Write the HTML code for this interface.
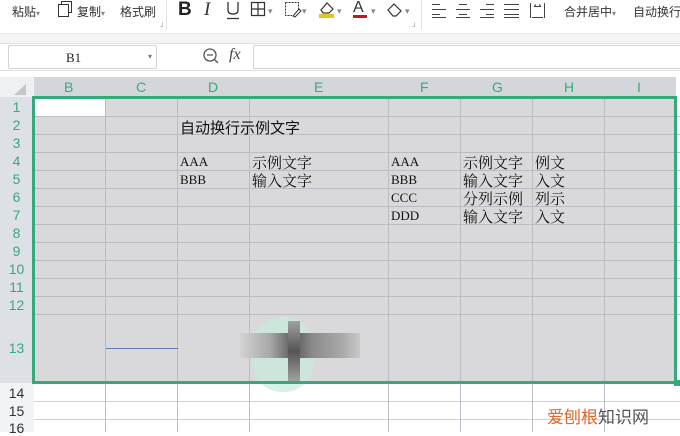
<!DOCTYPE html>
<html><head><meta charset="utf-8"><style>
*{margin:0;padding:0;box-sizing:border-box}
body{width:680px;height:432px;overflow:hidden;background:#fff;font-family:"Liberation Sans","Noto Sans CJK SC",sans-serif;position:relative}
.a{position:absolute;white-space:nowrap}
.tb{font-size:12px;color:#333;top:3px}
.hl{position:absolute;height:1px;background:#b9bcc4}
.vl{position:absolute;width:1px;background:#b9bcc4}
.cell{position:absolute;font-size:13px;color:#111;font-family:"Liberation Serif","Noto Serif CJK SC",serif;white-space:nowrap}
.rn{position:absolute;width:33px;text-align:center;font-size:14px;color:#3ca977;font-family:"Liberation Sans",sans-serif}
.cn{position:absolute;top:79px;font-size:14px;color:#3ca977}
.ar{position:absolute;font-size:9px;color:#888;top:6px}
</style></head><body>
<!-- toolbar -->
<div class="a tb" style="left:12px">粘贴<span style="font-size:8px;color:#888">▾</span></div>
<svg class="a" style="left:56px;top:0" width="18" height="18"><path d="M5.5 4.5V1.5H15.5V12.5H12.5M2.5 4.5H12.5V16.5H2.5Z" fill="none" stroke="#333"/></svg>
<div class="a tb" style="left:77px">复制<span style="font-size:8px;color:#888">▾</span></div>
<div class="a tb" style="left:120px">格式刷</div>
<div class="a" style="left:160px;top:24px;font-size:7px;color:#888">┘</div>
<div class="a" style="left:166px;top:0;width:1px;height:30px;background:#e3e3e3"></div>
<div class="a" style="left:178px;top:-1px;font-size:19px;font-weight:bold;color:#222">B</div>
<div class="a" style="left:204px;top:-1px;font-size:19px;font-style:italic;font-family:'Liberation Serif';color:#333">I</div>
<svg class="a" style="left:225px;top:0" width="16" height="20"><path d="M3 2V10Q3 14 8 14Q13 14 13 10V2M2 18.5H14" fill="none" stroke="#333" stroke-width="1.3"/></svg>
<svg class="a" style="left:250px;top:1px" width="16" height="16"><path d="M1.5 1.5H14.5V14.5H1.5ZM8 1.5V14.5M1.5 8H14.5" fill="none" stroke="#333" stroke-width="1.2"/></svg>
<div class="ar" style="left:268px">▾</div>
<svg class="a" style="left:284px;top:1px" width="18" height="18"><path d="M1.5 1.5H14.5V8M1.5 1.5V14.5H8" fill="none" stroke="#333" stroke-dasharray="2 1"/><path d="M9 15L15 8L17 10L11 16Z" fill="none" stroke="#333"/></svg>
<div class="ar" style="left:302px">▾</div>
<svg class="a" style="left:318px;top:0" width="18" height="20"><path d="M3 10L9 3L15 9L11 13H5Z" fill="none" stroke="#333" stroke-width="1.2"/><rect x="1" y="14" width="15" height="4" fill="#e8c416"/></svg>
<div class="ar" style="left:337px">▾</div>
<div class="a" style="left:353px;top:-1px;font-size:16px;color:#333">A</div>
<div class="a" style="left:353px;top:15px;width:14px;height:3px;background:#c9151e"></div>
<div class="ar" style="left:371px">▾</div>
<svg class="a" style="left:386px;top:1px" width="18" height="18"><path d="M2 9L8 3L15 10L10 15H7Z" fill="none" stroke="#333" stroke-width="1.2"/></svg>
<div class="ar" style="left:405px">▾</div>
<div class="a" style="left:412px;top:24px;font-size:7px;color:#888">┘</div>
<div class="a" style="left:421px;top:0;width:1px;height:30px;background:#e3e3e3"></div>
<svg class="a" style="left:430px;top:1px" width="120" height="18">
<g fill="none" stroke="#444" stroke-width="1">
<path d="M2 3.5H10M2 8.5H16M2 13.5H10M2 16.5H16"/>
<path d="M29 3.5H37M26 8.5H40M29 13.5H37M26 16.5H40"/>
<path d="M56 3.5H64M50 8.5H64M56 13.5H64M50 16.5H64"/>
<path d="M74 3.5H89M74 8.5H89M74 13.5H89M74 16.5H89"/>
<path d="M100.5 2V17M114.5 2V17M102 16.5H113M104 5.5H111M104 5.5L106 3.5M111 5.5L109 3.5"/>
</g></svg>
<div class="a tb" style="left:564px">合并居中<span style="font-size:8px;color:#888">▾</span></div>
<div class="a tb" style="left:633px">自动换行</div>
<div class="a" style="left:0;top:33px;width:680px;height:11px;background:#f3f4f5;border-top:1px solid #e6e6e6;border-bottom:1px solid #e0e0e0"></div>
<!-- formula bar -->
<div class="a" style="left:8px;top:45px;width:149px;height:24px;border:1px solid #d4d4d4;border-radius:2px"></div>
<div class="a" style="left:66px;top:50px;font-size:13px;font-family:'Liberation Serif',serif;color:#222">B1</div>
<div class="a" style="left:148px;top:52px;font-size:8px;color:#777">▾</div>
<svg class="a" style="left:202px;top:47px" width="18" height="18"><circle cx="8" cy="8" r="6" fill="none" stroke="#555" stroke-width="1.3"/><path d="M5 8H11M12.5 12.5L16 16" stroke="#555" stroke-width="1.3"/></svg>
<div class="a" style="left:229px;top:46px;font-size:16px;font-style:italic;font-family:'Liberation Serif',serif;color:#444">fx</div>
<div class="a" style="left:253px;top:45px;width:430px;height:24px;border:1px solid #d4d4d4;border-radius:2px"></div>
<div class="a" style="left:0;top:70px;width:680px;height:1px;background:#e0e0e0"></div>
<!-- headers -->
<div class="a" style="left:0;top:77px;width:34px;height:20px;background:#eef0f2"></div>
<div class="a" style="left:14px;top:84px;width:0;height:0;border-left:12px solid transparent;border-bottom:11px solid #c4c6ca"></div>
<div class="a" style="left:34px;top:77px;width:642px;height:20px;background:#d3d6db"></div>
<div class="cn" style="left:64px">B</div><div class="cn" style="left:136px">C</div><div class="cn" style="left:208px">D</div><div class="cn" style="left:314px">E</div><div class="cn" style="left:420px">F</div><div class="cn" style="left:492px">G</div><div class="cn" style="left:564px">H</div><div class="cn" style="left:637px">I</div>
<div class="a" style="left:0;top:97px;width:34px;height:286px;background:#dde0e4"></div>
<div class="a" style="left:0;top:383px;width:34px;height:49px;background:#f2f3f4"></div>
<!-- grid selected -->
<div class="a" style="left:34px;top:97px;width:642px;height:286px;background:#d9d9db"></div>
<div class="a" style="left:35px;top:99px;width:70px;height:17px;background:#fff"></div>
<div class="hl" style="left:34px;width:646px;top:116px"></div>
<div class="hl" style="left:34px;width:646px;top:134px"></div>
<div class="hl" style="left:34px;width:646px;top:152px"></div>
<div class="hl" style="left:34px;width:646px;top:170px"></div>
<div class="hl" style="left:34px;width:646px;top:188px"></div>
<div class="hl" style="left:34px;width:646px;top:206px"></div>
<div class="hl" style="left:34px;width:646px;top:224px"></div>
<div class="hl" style="left:34px;width:646px;top:242px"></div>
<div class="hl" style="left:34px;width:646px;top:260px"></div>
<div class="hl" style="left:34px;width:646px;top:278px"></div>
<div class="hl" style="left:34px;width:646px;top:296px"></div>
<div class="hl" style="left:34px;width:646px;top:314px"></div>
<div class="hl" style="left:34px;width:646px;top:401px;background:#d0d2d6"></div>
<div class="hl" style="left:34px;width:646px;top:419px;background:#d0d2d6"></div>
<div class="vl" style="left:105px;top:97px;height:335px"></div>
<div class="vl" style="left:177px;top:97px;height:335px"></div>
<div class="vl" style="left:249px;top:97px;height:335px"></div>
<div class="vl" style="left:388px;top:97px;height:335px"></div>
<div class="vl" style="left:460px;top:97px;height:335px"></div>
<div class="vl" style="left:532px;top:97px;height:335px"></div>
<div class="vl" style="left:604px;top:97px;height:335px"></div>
<div class="a" style="left:106px;top:348px;width:72px;height:1px;background:#5b7fb5"></div>
<!-- blurred cursor -->
<div class="a" style="left:252px;top:317px;width:62px;height:75px;border-radius:30px;background:rgba(200,235,220,.7)"></div>
<div class="a" style="left:240px;top:333px;width:120px;height:25px;background:linear-gradient(90deg,#d3d3d3,#a8a8a8 25%,#5a5a5a 45%,#8a8a8a 60%,#a9a9a9 85%,#c8c8c8)"></div>
<div class="a" style="left:288px;top:321px;width:12px;height:60px;background:linear-gradient(#a0a0a0,#555 50%,#a0a0a0)"></div>
<!-- green selection border -->
<div class="a" style="left:32px;top:96px;width:645px;height:288px;border:3px solid #36a97a"></div>
<div class="a" style="left:674px;top:380px;width:6px;height:6px;background:#36a97a"></div>
<!-- row numbers -->
<div class="rn" style="top:99px">1</div><div class="rn" style="top:117px">2</div><div class="rn" style="top:135px">3</div><div class="rn" style="top:153px">4</div><div class="rn" style="top:171px">5</div><div class="rn" style="top:189px">6</div><div class="rn" style="top:207px">7</div><div class="rn" style="top:225px">8</div><div class="rn" style="top:243px">9</div><div class="rn" style="top:261px">10</div><div class="rn" style="top:279px">11</div><div class="rn" style="top:297px">12</div><div class="rn" style="top:340px">13</div>
<div class="rn" style="top:385px;color:#333">14</div><div class="rn" style="top:403px;color:#333">15</div><div class="rn" style="top:420px;color:#333">16</div>
<!-- cells -->
<div class="cell" style="left:180px;top:117px;font-size:15px;font-family:'Liberation Sans','Noto Sans CJK SC',sans-serif">自动换行示例文字</div>
<div class="cell" style="left:180px;top:154px">AAA</div><div class="cell" style="left:252px;top:152px;font-size:15px">示例文字</div>
<div class="cell" style="left:180px;top:172px">BBB</div><div class="cell" style="left:252px;top:170px;font-size:15px">输入文字</div>
<div class="cell" style="left:391px;top:154px">AAA</div><div class="cell" style="left:463px;top:152px;font-size:15px">示例文字</div><div class="cell" style="left:535px;top:152px;font-size:15px">例文</div>
<div class="cell" style="left:391px;top:172px">BBB</div><div class="cell" style="left:463px;top:170px;font-size:15px">输入文字</div><div class="cell" style="left:535px;top:170px;font-size:15px">入文</div>
<div class="cell" style="left:391px;top:190px">CCC</div><div class="cell" style="left:463px;top:188px;font-size:15px">分列示例</div><div class="cell" style="left:535px;top:188px;font-size:15px">列示</div>
<div class="cell" style="left:391px;top:208px">DDD</div><div class="cell" style="left:463px;top:206px;font-size:15px">输入文字</div><div class="cell" style="left:535px;top:206px;font-size:15px">入文</div>
<!-- watermark -->
<div class="a" style="left:547px;top:403px;font-size:17px;color:#d96a2f">爱刨根<span style="color:#555">知识网</span></div>
</body></html>
